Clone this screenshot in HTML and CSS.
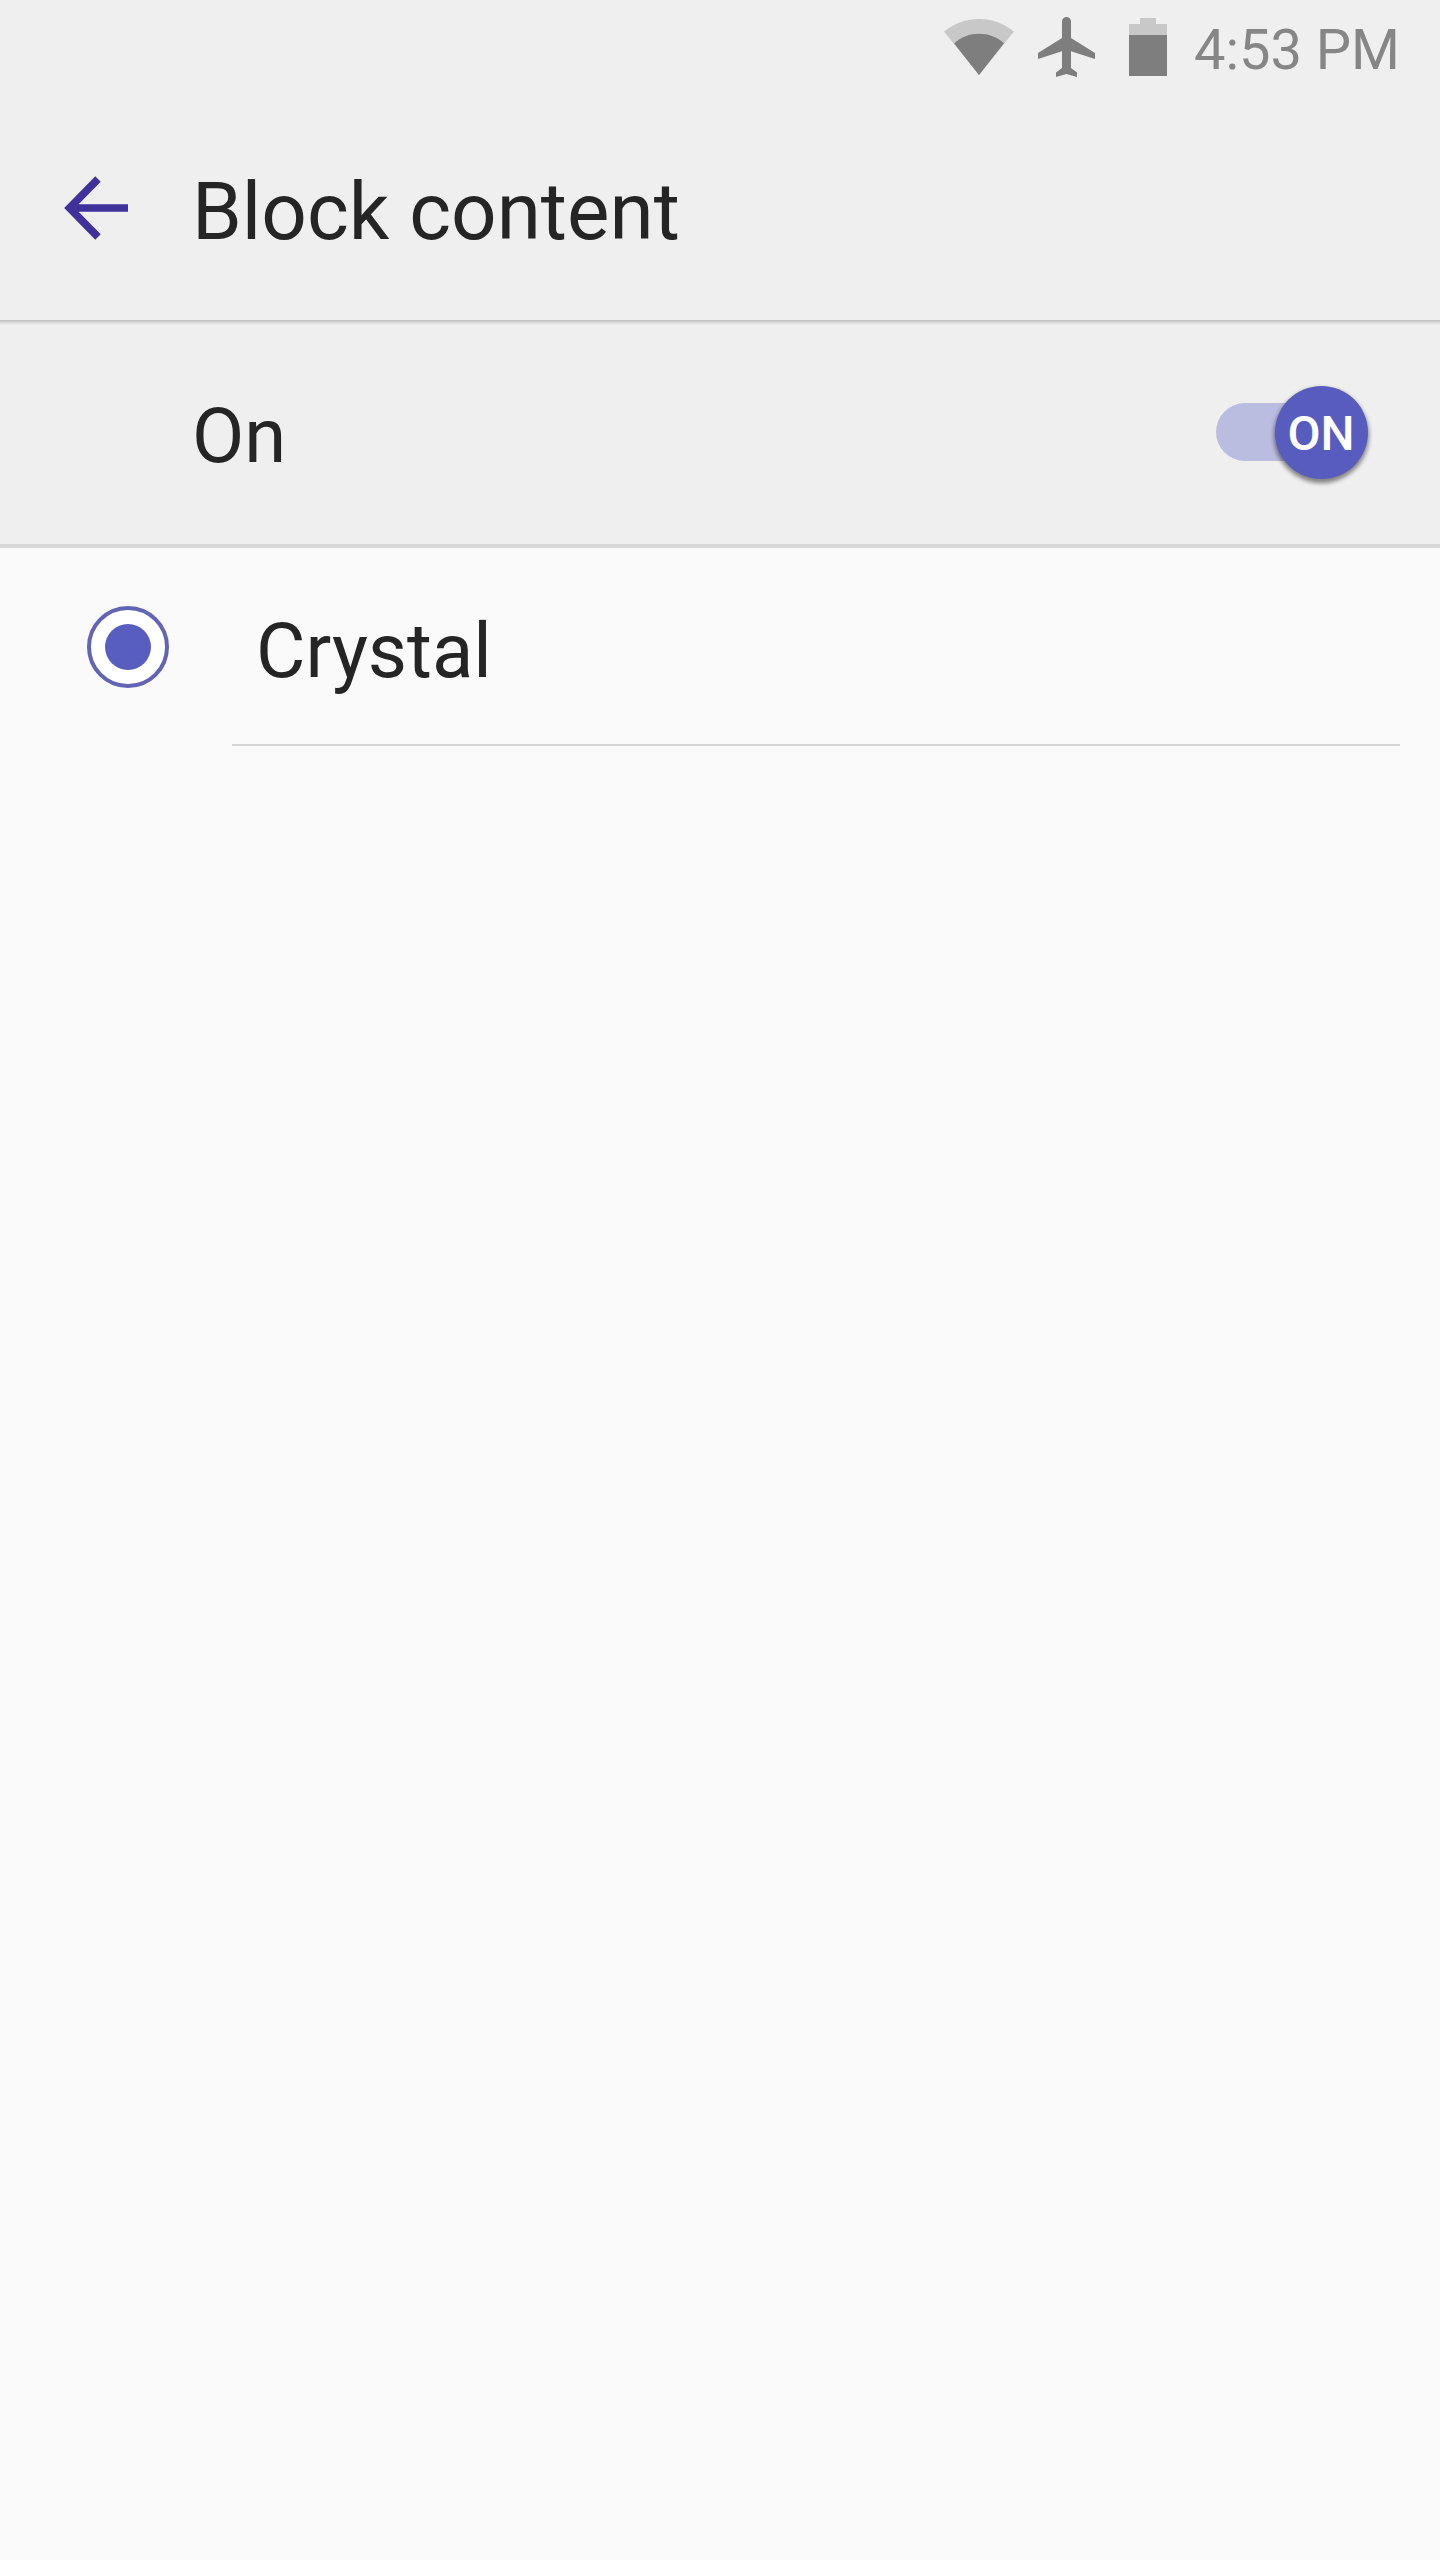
FILE: index.html
```html
<!DOCTYPE html>
<html lang="en">
<head>
    <meta charset="UTF-8">
    <meta name="viewport" content="width=device-width, initial-scale=1.0">
    <title>Block content</title>
    <link rel="stylesheet" href="styles.css">
</head>
<body>
    <!-- Status bar -->
    <div class="status-bar">
        <svg class="wifi" width="70" height="56" viewBox="0 0 70 56">
            <path fill="#c8c8c8" d="M0 12.5C10 4.500 22 0 35 0s25 4.500 35 12.500L35 56z"/>
            <path fill="#7e7e7e" d="M10.200 24.500C17 18 25.500 14.800 35 14.800s18 3.200 25 9.400L35 56z"/>
        </svg>
        <svg class="airplane" width="57" height="60" viewBox="0 0 57 60">
            <path fill="#7e7e7e" d="M24 4.500a4.500 4.500 0 0 1 9 0V21l24 15v6L33 34.300V51l6 4.500V60l-10.500-3L18 60v-4.500l6-4.500V34.300L0 42v-6l24-15z"/>
        </svg>
        <svg class="battery" width="38" height="58" viewBox="0 0 38 58">
            <path fill="#c8c8c8" d="M11 0h16v6h11v11H0V6h11z"/>
            <path fill="#7e7e7e" d="M0 17h38v41H0z"/>
        </svg>
        <span class="clock">4:53 PM</span>
    </div>

    <!-- Header -->
    <div class="header">
        <svg class="back" width="64" height="64" viewBox="0 0 64 64">
            <path fill="none" stroke="#3f329d" stroke-width="7.600" d="M34 3 5.500 32l28.500 29M6 32h58"/>
        </svg>
        <h1>Block content</h1>
    </div>

    <!-- Main switch -->
    <div class="switch-row">
        <span class="label">On</span>
        <div class="switch">
            <div class="thumb">ON</div>
        </div>
    </div>

    <!-- Content blockers -->
    <div class="item">
        <div class="radio"></div>
        <div class="label">Crystal</div>
    </div>
</body>
</html>
```
FILE: styles.css
```css
* {
    box-sizing: border-box;
}

body {
    margin: 0;
    min-height: 2560px;
    background-color: #fafafa;
    color: #252525;
    font-family: Roboto, sans-serif;
}

svg {
    display: block;
    flex: none;
}

/* Status bar */
.status-bar {
    display: flex;
    justify-content: flex-end;
    align-items: flex-start;
    height: 96px;
    padding-right: 40px;
    background-color: #efefef;
}

.wifi {
    margin-top: 19px;
}

.airplane {
    margin-top: 17px;
    margin-left: 24px;
}

.battery {
    margin-top: 18px;
    margin-left: 34px;
}

.clock {
    margin-left: 27px;
    font-size: 56px;
    line-height: 100px;
    color: #868686;
    white-space: nowrap;
}

/* Header */
.header {
    display: flex;
    align-items: center;
    height: 224px;
    padding-left: 64px;
    background-color: #efefef;
}

h1 {
    margin: 0;
    padding-top: 8px;
    padding-left: 64px;
    font-size: 80px;
    font-weight: 400;
    line-height: 100px;
}

/* Switch row */
.switch-row {
    display: flex;
    justify-content: space-between;
    align-items: center;
    height: 228px;
    padding-left: 192px;
    padding-right: 72px;
    background: linear-gradient(#bebebe, #d6d6d6 2px, #efefef 5px);
    border-bottom: 4px solid #d8d8d8;
}

.label {
    padding-top: 8px;
    font-size: 76px;
    line-height: 90px;
}

.switch {
    display: flex;
    justify-content: flex-end;
    align-items: center;
    width: 152px;
    height: 58px;
    border-radius: 29px;
    background: linear-gradient(to right, #bbbde0 110px, transparent 110px);
}

.thumb {
    flex: none;
    width: 93px;
    height: 93px;
    border-radius: 50%;
    background-color: #575cbe;
    box-shadow: 0 3px 4px 1px rgba(0, 0, 0, 0.45);
    color: #fff;
    font-size: 48px;
    font-weight: 500;
    line-height: 95px;
    text-align: center;
    text-indent: -1px;
}

/* List item */
.item {
    display: flex;
    align-items: center;
    height: 198px;
    padding-left: 87px;
    padding-right: 40px;
}

.radio {
    flex: none;
    display: flex;
    align-items: center;
    justify-content: center;
    width: 82px;
    height: 82px;
    border: 4px solid #6264b4;
    border-radius: 50%;
    background-color: #fff;
}

.radio::before {
    content: "";
    width: 46px;
    height: 46px;
    border-radius: 50%;
    background-color: #585ebf;
}

.item .label {
    flex: 1;
    height: 198px;
    margin-left: 63px;
    padding-top: 4px;
    padding-left: 24px;
    border-bottom: 2px solid #d6d6d6;
    line-height: 198px;
}
```
